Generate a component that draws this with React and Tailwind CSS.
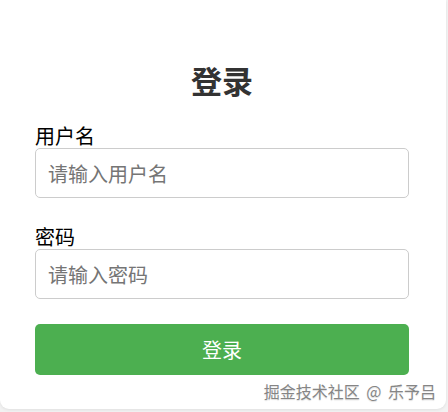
import React from "react";

const font = { fontFamily: '"Microsoft YaHei", "Noto Sans CJK SC", sans-serif' };

const Field = ({ label, placeholder, type = "text", className = "" }) => (
  <div className={className}>
    <label className="block text-[20px] leading-[24px] text-black">{label}</label>
    <input
      type={type}
      placeholder={placeholder}
      className="block w-full h-[50px] px-[12px] text-[20px] border border-[#cccccc] rounded-[5px] placeholder:text-[#757575] outline-none"
    />
  </div>
);

export default function App() {
  return (
    <div className="w-[448px] h-[412px] bg-[#f2f2f2] overflow-hidden" style={font}>
      <div className="w-[446px] h-[409px] bg-white rounded-b-[9px] shadow-[0_1px_3px_rgba(0,0,0,0.08)] px-[35px] pt-[60px] flex flex-col">
        <h2 className="text-center text-[31px] leading-[40px] font-bold text-[#333333] -translate-x-[1px]">登录</h2>

        <Field label="用户名" placeholder="请输入用户名" className="mt-[24px] w-[374px]" />
        <Field label="密码" placeholder="请输入密码" type="password" className="mt-[27px] w-[374px]" />

        <button className="mt-[25px] w-[374px] h-[51px] rounded-[5px] bg-[#4caf50] text-white text-[20px]">
          登录
        </button>

        <div className="mt-[5px] -mr-[25px] text-right whitespace-pre text-[16px] leading-[22px] [word-spacing:3px] text-[#858585] [text-shadow:0_0_1px_#ffffff,0_1px_1px_rgba(0,0,0,0.15)]">
          掘金技术社区 @ 乐予吕
        </div>
      </div>
    </div>
  );
}
